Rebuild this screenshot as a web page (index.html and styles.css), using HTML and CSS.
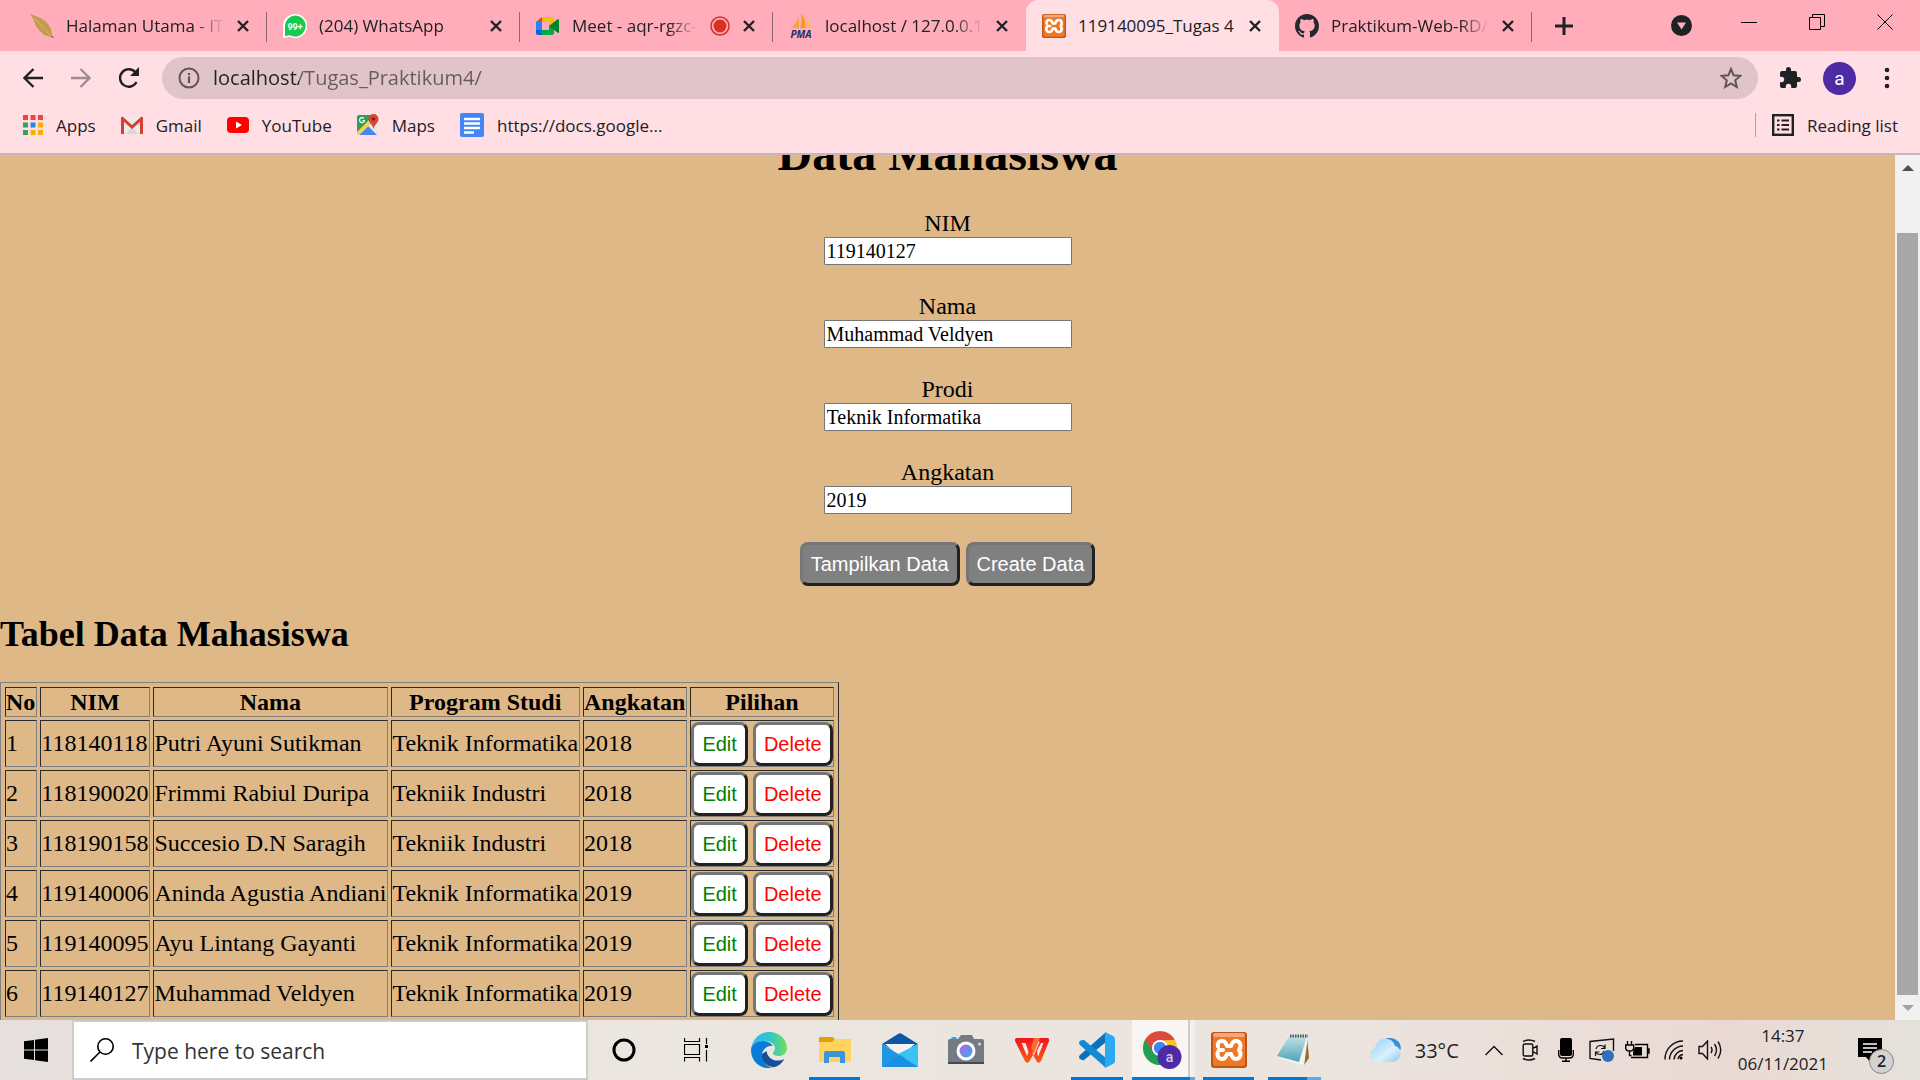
FILE: index.html
```html
<!DOCTYPE html>
<html lang="id">
<head>
<meta charset="utf-8">
<title>119140095_Tugas 4</title>
<link rel="stylesheet" href="styles.css">
</head>
<body>
<svg class="defs" width="0" height="0" aria-hidden="true">
  <defs>
    <linearGradient id="edgeTop" x1="0" y1="0" x2="1" y2="0"><stop offset="0" stop-color="#35b8f0"/><stop offset=".5" stop-color="#2fc6d0"/><stop offset="1" stop-color="#6de05a"/></linearGradient>
    <linearGradient id="lens" x1="0" y1="0" x2="1" y2="1"><stop offset="0" stop-color="#c15ee0"/><stop offset="1" stop-color="#27b4f0"/></linearGradient>
    <linearGradient id="wps" x1="0" y1="0" x2="0" y2="1"><stop offset="0" stop-color="#f0141e"/><stop offset="1" stop-color="#ff5a14"/></linearGradient>
    <linearGradient id="cloud" x1="0" y1="0" x2="1" y2="1"><stop offset="0" stop-color="#8fd0f8"/><stop offset=".6" stop-color="#d9f1fd"/><stop offset="1" stop-color="#8cc9f3"/></linearGradient>
    <linearGradient id="note" x1="0" y1="0" x2="0" y2="1"><stop offset="0" stop-color="#c3e3e6"/><stop offset="1" stop-color="#4fa3b5"/></linearGradient>
    <symbol id="x" viewBox="0 0 14 14"><path d="M2 2l10 10M12 2L2 12" stroke="#202124" stroke-width="2.4"/></symbol>
    <symbol id="xampp" viewBox="0 0 36 36">
      <rect width="36" height="36" rx="3" fill="#b9561a"/><rect x="2" y="2" width="32" height="32" rx="2" fill="#f37623"/><rect x="2" y="1" width="32" height="4" rx="2" fill="#f3a77c"/>
      <path d="M7 14.500C6 11 8 9 11 9c4 0 4 3 5 5h4c1-2 1-5 5-5c5 0 5.500 6 3 9c2.500 3 2 9-3 9c-4 0-4-3-5-5h-4c-1 2-1 5-5 5c-5 0-5.500-6-3-9h4" fill="none" stroke="#fff" stroke-width="4" stroke-linejoin="round" stroke-linecap="round"/>
    </symbol>
  </defs>
</svg>

<header class="chrome">
  <div class="tabstrip">
    <div class="tabs">
      <div class="tab">
        <svg class="fav" viewBox="0 0 24 24"><path d="M0 0c6 2 11 4 14 6c5 4 8 9 8 15l1 3c-3-2-8-2-10-4c-5-4-8-9-9-13C3 4 1 2 0 0z" fill="#c49a4f"/><path d="M4 4l18 19" stroke="#d0a860" stroke-width="1.500" fill="none"/><path d="M21 22l3 1v1l-3-1z" fill="#d93b3b"/></svg>
        <span class="tab-title">Halaman Utama - ITERA</span><button class="tab-close" aria-label="Close"><svg viewBox="0 0 14 14"><use href="#x"/></svg></button>
      </div>
      <div class="tab">
        <svg class="fav" viewBox="0 0 24 24"><path d="M12 0a12 12 0 1 1-5 22.800L0 24V12A12 12 0 0 1 12 0z" fill="#fff"/><path d="M12 1.500a10.500 10.500 0 1 1-5 19.700L2 22V12A10.500 10.500 0 0 1 12 1.500z" fill="#17c950"/><text x="12" y="16" class="badge-text">99+</text></svg>
        <span class="tab-title">(204) WhatsApp</span><button class="tab-close" aria-label="Close"><svg viewBox="0 0 14 14"><use href="#x"/></svg></button>
      </div>
      <div class="tab">
        <svg class="fav" viewBox="0 0 24 24"><path d="M0 8l6-5v5z" fill="#ea4335"/><path d="M6 3h10a2 2 0 0 1 2 2v7h-5V8H6z" fill="#fbbc04"/><path d="M0 8h6v8H0z" fill="#2684fc"/><path d="M0 16h6v5H2a2 2 0 0 1-2-2z" fill="#0066da"/><path d="M6 16h7v-4h5v7a2 2 0 0 1-2 2H6z" fill="#00ac47"/><path d="M13 12l9-7q1 0 1 1v12q0 1-1 1z" fill="#00832d"/></svg>
        <span class="tab-title">Meet - aqr-rgzc-xkp</span>
        <svg class="rec" viewBox="0 0 20 20"><circle cx="10" cy="10" r="9" fill="none" stroke="#d93025" stroke-width="1.500"/><circle cx="10" cy="10" r="6.500" fill="#d93025"/></svg>
        <button class="tab-close" aria-label="Close"><svg viewBox="0 0 14 14"><use href="#x"/></svg></button>
      </div>
      <div class="tab before-active">
        <svg class="fav" viewBox="0 0 24 24"><path d="M10 3v11H2c3-3 6-6 8-11z" fill="#f9a13c"/><path d="M12 0c4 4 5 9 4 14h-5c2-4 2-9 1-14z" fill="#f89c0e"/><path d="M17 4c3 3 5 7 6 10h-5c1-3 0-7-1-10z" fill="#fbb95b"/><text x="12" y="23.500" class="pma-text">PMA</text></svg>
        <span class="tab-title">localhost / 127.0.0.1 / tugas</span><button class="tab-close" aria-label="Close"><svg viewBox="0 0 14 14"><use href="#x"/></svg></button>
      </div>
      <div class="tab active">
        <svg class="fav" viewBox="0 0 36 36"><use href="#xampp"/></svg>
        <span class="tab-title">119140095_Tugas 4</span><button class="tab-close" aria-label="Close"><svg viewBox="0 0 14 14"><use href="#x"/></svg></button>
      </div>
      <div class="tab">
        <svg class="fav" viewBox="0 0 16 16"><path fill="#24292f" d="M8 0C3.580 0 0 3.580 0 8c0 3.540 2.290 6.530 5.470 7.590.4.070.55-.17.55-.38 0-.19-.01-.82-.01-1.490-2.010.37-2.530-.49-2.690-.94-.09-.23-.48-.94-.82-1.130-.28-.15-.68-.52-.01-.53.63-.01 1.080.58 1.230.82.72 1.210 1.870.87 2.330.66.070-.52.28-.87.51-1.070-1.780-.2-3.640-.89-3.640-3.950 0-.87.31-1.590.82-2.150-.08-.2-.36-1.020.08-2.120 0 0 .67-.21 2.200.82.64-.18 1.320-.27 2-.27s1.360.09 2 .27c1.530-1.040 2.200-.82 2.200-.82.44 1.100.16 1.920.08 2.120.51.56.82 1.270.82 2.150 0 3.070-1.870 3.750-3.650 3.950.29.25.54.73.54 1.480 0 1.070-.01 1.930-.01 2.200 0 .21.15.46.55.38A8.010 8.010 0 0 0 16 8c0-4.420-3.580-8-8-8z"/></svg>
        <span class="tab-title">Praktikum-Web-RD/Tugas</span><button class="tab-close" aria-label="Close"><svg viewBox="0 0 14 14"><use href="#x"/></svg></button>
      </div>
    </div>
    <button class="new-tab" aria-label="New tab"><svg width="18" height="18" viewBox="0 0 18 18"><path d="M9 0v18M0 9h18" stroke="#202124" stroke-width="3"/></svg></button>
    <div class="window-controls">
      <button class="tab-search" aria-label="Search tabs"><svg width="21" height="21" viewBox="0 0 21 21"><circle cx="10.500" cy="10.500" r="10.500" fill="#202124"/><path d="M6 7.500h9l-4.500 7z" fill="#ffadbb"/></svg></button>
      <button aria-label="Minimize"><svg width="16" height="16" viewBox="0 0 16 16"><path d="M0 8.500h16" stroke="#000"/></svg></button>
      <button aria-label="Restore"><svg width="16" height="16" viewBox="0 0 16 16"><path d="M.5 3.500h11v12H.5zM3.500 3.500v-3h12v12h-4" fill="none" stroke="#000"/></svg></button>
      <button aria-label="Close window"><svg width="16" height="16" viewBox="0 0 16 16"><path d="M.5.5l15 15M15.500.5l-15 15" stroke="#000"/></svg></button>
    </div>
  </div>

  <div class="toolbar">
    <button class="nav" aria-label="Back"><svg width="20" height="20" viewBox="0 0 20 20"><path d="M20 10H2M10.500 1L1.500 10l9 9" fill="none" stroke="#202124" stroke-width="2.300"/></svg></button>
    <button class="nav" aria-label="Forward"><svg width="20" height="20" viewBox="0 0 20 20"><path d="M0 10h18M9.500 1l9 9-9 9" fill="none" stroke="#a08c90" stroke-width="2.300"/></svg></button>
    <button class="nav" aria-label="Reload"><svg width="22" height="22" viewBox="0 0 22 22"><path d="M18.500 15a8.700 8.700 0 1 1-1-9.500" fill="none" stroke="#202124" stroke-width="2.400"/><path d="M21 0v9h-9z" fill="#202124"/></svg></button>
    <div class="omnibox">
      <svg width="22" height="22" viewBox="0 0 22 22"><circle cx="11" cy="11" r="9.500" fill="none" stroke="#5f5559" stroke-width="2"/><path d="M11 9.500V16M11 6v2.200" stroke="#5f5559" stroke-width="2.200"/></svg>
      <input class="url" type="text" aria-label="Address" value="localhost/Tugas_Praktikum4/" spellcheck="false">
      <button aria-label="Bookmark"><svg width="22" height="22" viewBox="0 0 22 22"><path d="M11 2l2.600 6.300 6.800.6-5.200 4.400 1.600 6.700L11 16.500 5.200 20l1.600-6.700L1.600 8.900l6.800-.6z" fill="none" stroke="#5f5559" stroke-width="2"/></svg></button>
    </div>
    <div class="toolbar-end">
      <button aria-label="Extensions"><svg width="24" height="24" viewBox="0 0 24 24"><path fill="#202124" d="M20.500 11H19V7a2 2 0 0 0-2-2h-4V3.500a2.500 2.500 0 0 0-5 0V5H4a2 2 0 0 0-2 2v3.800h1.500a2.700 2.700 0 0 1 0 5.400H2V20a2 2 0 0 0 2 2h3.800v-1.500a2.700 2.700 0 0 1 5.400 0V22H17a2 2 0 0 0 2-2v-4h1.500a2.500 2.500 0 0 0 0-5z"/></svg></button>
      <button class="avatar" aria-label="Profile">a</button>
      <button aria-label="Menu"><svg width="6" height="22" viewBox="0 0 6 22"><g fill="#202124"><circle cx="3" cy="3" r="2.300"/><circle cx="3" cy="11" r="2.300"/><circle cx="3" cy="19" r="2.300"/></g></svg></button>
    </div>
  </div>

  <nav class="bookmarks">
    <a href="#"><svg width="20" height="20" viewBox="0 0 20 20"><g fill="#f44336"><path d="M0 0h5v5H0zM7.500 0h5v5h-5zM15 0h5v5h-5z"/></g><path d="M0 7.500h5v5H0zM0 15h5v5H0z" fill="#34a15e"/><path d="M7.500 7.500h5v5h-5z" fill="#1e88e5"/><path d="M15 7.500h5v5h-5zM7.500 15h5v5h-5zM15 15h5v5h-5z" fill="#fbad04"/></g></svg>Apps</a>
    <a href="#"><svg width="22" height="17" viewBox="0 0 22 17"><path d="M1 0h20v17H1z" fill="#eceaea"/><path d="M4 17l7-7 7 7z" fill="#d9d6d6"/><path d="M1.500 17V1.500L11 10l9.500-8.500V17" fill="none" stroke="#d93c30" stroke-width="3"/></svg>Gmail</a>
    <a href="#"><svg width="22" height="16" viewBox="0 0 22 16"><rect width="22" height="16" rx="4" fill="#f00"/><path d="M9 4.500l6 3.500-6 3.500z" fill="#fff"/></svg>YouTube</a>
    <a href="#"><svg width="22" height="22" viewBox="0 0 22 22"><rect y="1" width="20" height="20" rx="2" fill="#e9e7e3"/><path d="M0 3q0-2 2-2h14L1 20q-1 0-1-1z" fill="#2e9f5b"/><path d="M2 21l9-9 9 9z" fill="#4a86f0"/><path d="M0 18L14 4l3 3L2 21q-2 0-2-2z" fill="#fbd046"/><path d="M16.500 0a5 5 0 0 1 5 5c0 4-4 5-5 10c-1-5-5-6-5-10a5 5 0 0 1 5-5z" fill="#db4437"/><circle cx="16.500" cy="5" r="1.800" fill="#7b231c"/><path d="M7 4.500a2.500 2.500 0 1 0 .5 2H5.500" fill="none" stroke="#fff" stroke-width="1.200"/></svg>Maps</a>
    <a href="#"><svg width="24" height="24" viewBox="0 0 24 24"><rect width="24" height="24" rx="2" fill="#4285f4"/><path d="M4 6h16M4 10.500h16M4 15h16M4 19.500h10" stroke="#fff" stroke-width="2.300"/></svg>https://docs.google...</a>
    <button class="reading"><svg width="22" height="22" viewBox="0 0 22 22"><rect x="1.200" y="1.200" width="19.600" height="19.600" fill="none" stroke="#202124" stroke-width="2.400"/><path d="M5 6.500h2.500M5 11h2.500M5 15.500h2.500M9.500 6.500H17M9.500 11H17M9.500 15.500H17" stroke="#202124" stroke-width="2.200"/></svg>Reading list</button>
  </nav>
</header>

<div class="viewport">
  <main class="page">
    <h1>Data Mahasiswa</h1>
    <form class="form">
      <div class="field"><label for="nim">NIM</label><input id="nim" type="text" value="119140127"></div>
      <div class="field"><label for="nama">Nama</label><input id="nama" type="text" value="Muhammad Veldyen"></div>
      <div class="field"><label for="prodi">Prodi</label><input id="prodi" type="text" value="Teknik Informatika"></div>
      <div class="field"><label for="angkatan">Angkatan</label><input id="angkatan" type="text" value="2019"></div>
      <div class="actions"><button class="btn" type="button">Tampilkan Data</button><button class="btn" type="button">Create Data</button></div>
    </form>
    <h2>Tabel Data Mahasiswa</h2>
    <table>
      <thead><tr><th>No</th><th>NIM</th><th>Nama</th><th>Program Studi</th><th>Angkatan</th><th>Pilihan</th></tr></thead>
      <tbody>
        <tr><td>1</td><td>118140118</td><td>Putri Ayuni Sutikman</td><td>Teknik Informatika</td><td>2018</td><td><div class="choices"><button class="btn edit">Edit</button><button class="btn delete">Delete</button></div></td></tr>
        <tr><td>2</td><td>118190020</td><td>Frimmi Rabiul Duripa</td><td>Tekniik Industri</td><td>2018</td><td><div class="choices"><button class="btn edit">Edit</button><button class="btn delete">Delete</button></div></td></tr>
        <tr><td>3</td><td>118190158</td><td>Succesio D.N Saragih</td><td>Tekniik Industri</td><td>2018</td><td><div class="choices"><button class="btn edit">Edit</button><button class="btn delete">Delete</button></div></td></tr>
        <tr><td>4</td><td>119140006</td><td>Aninda Agustia Andiani</td><td>Teknik Informatika</td><td>2019</td><td><div class="choices"><button class="btn edit">Edit</button><button class="btn delete">Delete</button></div></td></tr>
        <tr><td>5</td><td>119140095</td><td>Ayu Lintang Gayanti</td><td>Teknik Informatika</td><td>2019</td><td><div class="choices"><button class="btn edit">Edit</button><button class="btn delete">Delete</button></div></td></tr>
        <tr><td>6</td><td>119140127</td><td>Muhammad Veldyen</td><td>Teknik Informatika</td><td>2019</td><td><div class="choices"><button class="btn edit">Edit</button><button class="btn delete">Delete</button></div></td></tr>
      </tbody>
    </table>
  </main>
  <div class="scrollbar" aria-hidden="true">
    <svg width="12" height="6" viewBox="0 0 12 6"><path d="M0 6l6-6 6 6z" fill="#505050"/></svg>
    <div class="track"><div class="thumb"></div></div>
    <svg width="12" height="6" viewBox="0 0 12 6"><path d="M0 0l6 6 6-6z" fill="#a3a3a3"/></svg>
  </div>
</div>

<footer class="taskbar">
  <button class="start" aria-label="Start"><svg width="24" height="24" viewBox="0 0 24 24"><path d="M0 3.300l10-1.400v9.600H0zM11 1.700L24 0v11.500H11zM0 12.500h10v9.600L0 20.700zM11 12.500h13V24l-13-1.700z"/></svg></button>
  <div class="search">
    <svg width="24" height="24" viewBox="0 0 24 24"><circle cx="15.500" cy="8.500" r="7.700" fill="none" stroke="#000" stroke-width="1.600"/><path d="M10 14L.5 23.500" stroke="#000" stroke-width="1.600"/></svg>
    <input type="text" aria-label="Search" placeholder="Type here to search">
  </div>
  <button class="sys" aria-label="Cortana"><svg width="24" height="24" viewBox="0 0 24 24"><circle cx="12" cy="12" r="10" fill="none" stroke="#000" stroke-width="3"/></svg></button>
  <button class="sys" aria-label="Task view"><svg width="24" height="24" viewBox="0 0 24 24"><path d="M.5 0v3.500h15V0M.5 6.500h15v10H.5zM.5 23.500V19.500h15v4M22.500 0v6M22.500 12v11.500" fill="none" stroke="#000" stroke-width="1.200"/><path d="M21 7h3v3h-3z"/></svg></button>
  <div class="apps">
    <button class="app" aria-label="Edge"><svg width="36" height="36" viewBox="0 0 36 36"><path d="M0 18C1 7 9 0 18 0c11 0 18 8 18 16 0 5-4 8-8 8-3 0-6-1-6-3 0-1 2-2 2-5 0-4-5-7-10-7C6 9 1 14 0 18z" fill="url(#edgeTop)"/><path d="M0 18c0-5 6-9 12-9 5 0 9 3 10 5-5-1-12 4-11 11 1 6 6 10 11 11C9 38 0 29 0 18z" fill="#0a7bd6"/><path d="M11 22c-1 8 5 13 12 13.200C28 34 31 31 33.500 27c-9 4-17 0-18-8z" fill="#144f97"/></svg></button>
    <button class="app run" aria-label="File Explorer"><svg width="32" height="26" viewBox="0 0 32 26"><path d="M0 1q0-1 1-1h13l2 3v3H0z" fill="#e0a004"/><path d="M0 5h13l3-3h15q1 0 1 1v21q0 1-1 1H1q-1 0-1-1z" fill="#ffd45e"/><path d="M5 26V16q0-2 2-2h17q2 0 2 2v10h-5v-6H10v6z" fill="#3a95dc"/></svg></button>
    <button class="app" aria-label="Mail"><svg width="36" height="34" viewBox="0 0 36 34"><path d="M0 11L16 1q2-1.500 4 0l16 10-18 10z" fill="#0a57a8"/><path d="M3 11h30L18 24z" fill="#f5f3f2"/><path d="M0 11l18 11 18 12H0z" fill="#2196e3"/><path d="M36 11v23L16 21z" fill="#39c3f2"/><path d="M0 34h36L18 22z" fill="#1b8fe0"/></svg></button>
    <button class="app" aria-label="Camera"><svg width="36" height="30" viewBox="0 0 36 30"><rect x="3" y="2" width="6" height="4" rx="2" fill="#28a6e8"/><path d="M2 4h8l3-4h11l2 4h8q2 0 2 2v23H0V6q0-2 2-2z" fill="#747b84"/><path d="M0 27h36v2H0z" fill="#454a52"/><circle cx="18" cy="16" r="9.500" fill="#fff"/><circle cx="18" cy="16" r="6.500" fill="url(#lens)"/><circle cx="31.500" cy="9" r="1.500" fill="#d6d9dd"/></svg></button>
    <button class="app" aria-label="WPS Office"><svg width="34" height="25" viewBox="0 0 34 25"><path d="M2 0h30q3 0 2 3l-8 20q-1.500 3-4 1l-4-7-4 7q-2.500 2-4-1L0 3q-.5-3 2-3z" fill="url(#wps)"/><path d="M6.500 5h4l3 9-1.500 4z" fill="#f6ebe6"/><path d="M17 16l4.500-11.500h3M23 19l5.500-14h-2.500l-4 8z" fill="#f6ebe6"/><path d="M18.500 17L24 3.500" stroke="#f6ebe6" stroke-width="1.300"/><path d="M19 0h6l-6 15-3-5z" fill="#ff6a30"/></svg></button>
    <button class="app run" aria-label="VS Code"><svg width="36" height="36" viewBox="0 0 36 36"><path d="M1 23q-2 2 0 4l2 1q1 .5 2 0L27 10V0z" fill="#0773bd"/><path d="M1 13q-2-2 0-4l2-1q1-.5 2 0l22 18v10z" fill="#128ad6"/><path d="M26 0l8 4q2 1 2 3v22q0 2-2 3l-8 4z" fill="#2ba9f3"/></svg></button>
    <button class="app run current" aria-label="Chrome"><svg width="40" height="38" viewBox="0 0 40 38"><circle cx="17" cy="17" r="17" fill="#fbc02d"/><path d="M17 17L2.300 8.500A17 17 0 0 0 17 34l6-10z" fill="#1fa055"/><path d="M2.300 8.500A17 17 0 0 1 31.700 8.800L17 9.500 10 21z" fill="#da4a3d"/><circle cx="17" cy="17" r="8" fill="#fff"/><circle cx="17" cy="17" r="6.200" fill="#3f86ee"/><circle cx="26.500" cy="26" r="12" fill="#4f2aa5"/><text x="26.500" y="31" class="chrome-a">a</text></svg></button>
    <button class="app run" aria-label="XAMPP"><svg width="36" height="36" viewBox="0 0 36 36"><use href="#xampp"/></svg></button>
    <button class="app run stacked" aria-label="Notepad"><svg width="34" height="32" viewBox="0 0 34 32"><path d="M30 2l2 22-5 7z" fill="#9a6b2e"/><path d="M11 1l20 2-4 28-6-1-19-6z" fill="#f0f4f5"/><path d="M12 2h18l-8 26L0 22z" fill="url(#note)"/><path d="M13 2h18" stroke="#555" stroke-width="3" stroke-dasharray="1.500 1"/></svg></button>
  </div>
  <div class="tray">
    <button class="weather"><svg width="32" height="24" viewBox="0 0 32 24"><path d="M17 0h6q8 2 9 10l-3 7z" fill="#3a8fd8"/><path d="M7 24a7 7 0 0 1-1-13.500C7 4 12 0 18 1c5 0 7 4 8 7 4 1 6 4 5.500 8-.5 5-4 8-8 8z" fill="url(#cloud)"/></svg>33°C</button>
    <div class="tray-icons">
      <svg width="18" height="11" viewBox="0 0 18 11"><path d="M.5 10L9 1.500l8.500 8.500" fill="none" stroke="#111" stroke-width="1.400"/></svg>
      <svg width="16" height="22" viewBox="0 0 16 22"><path d="M1 2.500q6-3 12 0M1 19.500q6 3 12 0M2.700 5h6.600q1.500 0 1.500 1.500v9q0 1.500-1.500 1.500H2.700q-1.500 0-1.500-1.500v-9Q1.200 5 2.700 5zM11 9.500l4-2.500v8l-4-2.500" fill="none" stroke="#111" stroke-width="1.400"/></svg>
      <svg width="16" height="24" viewBox="0 0 16 24"><rect x="2" y="0" width="12" height="18" rx="2"/><path d="M.7 12v4q0 4 4 4h6.600q4 0 4-4v-4M8 20v3M4 23.300h8" fill="none" stroke="#000" stroke-width="1.400"/></svg>
      <svg width="26" height="24" viewBox="0 0 26 24"><path d="M12 22L1 20.500V3.500L24.500 1v12" fill="none" stroke="#111" stroke-width="1.400"/><path d="M7 11q1-3.500 4.500-3.500T15.500 10M16 6.500v4h-4M15 13q-1 3.500-4 3.500T7 14.500M6.500 18v-4h4" fill="none" stroke="#111" stroke-width="1.200"/><circle cx="19" cy="18" r="6" fill="#2a72bd"/></svg>
      <svg width="25" height="18" viewBox="0 0 25 18"><path d="M2.500 0v4M6.500 0v4M.7 4h8v3q0 3-4 3t-4-3zM4.500 10v4.500h2M10 3.500h12.500v13H6M22.500 8H24v4h-1.500" fill="none" stroke="#000" stroke-width="1.400"/><path d="M10 6h7v8.500H8v-4z"/></svg>
      <svg width="20" height="20" viewBox="0 0 20 20"><path d="M1 19.500A18 18 0 0 1 19 1M5.500 19.500A14 14 0 0 1 19 6M10 19.500A9.500 9.500 0 0 1 19 10.500" fill="none" stroke="#111" stroke-width="1.400"/><path d="M14 19a6 6 0 0 1 5-4.500" fill="none" stroke="#111" stroke-width="1.400"/><circle cx="17" cy="18" r="1.500"/></svg>
      <svg width="24" height="20" viewBox="0 0 24 20"><path d="M1 6.500h3.500L9.500 1v18l-5-5.500H1zM13 7q2 3 0 6M16.500 4q4 6 0 12M20 1.500q5.500 8.500 0 17" fill="none" stroke="#111" stroke-width="1.400"/></svg>
    </div>
    <div class="clock"><span>14:37</span><span>06/11/2021</span></div>
    <button class="notify" aria-label="Notifications"><svg width="24" height="24" viewBox="0 0 24 24"><path d="M0 0h24v19h-8l-4 5-4-5H0z"/><path d="M5 6h14M5 10h14M5 14h9" stroke="#fff" stroke-width="1.300"/></svg><span class="count">2</span></button>
  </div>
</footer>
</body>
</html>
```
FILE: styles.css
```css
* { box-sizing: border-box; }

body {
  margin: 0;
  height: 100vh;
  display: flex;
  flex-direction: column;
  overflow: hidden;
  font-family: "Open Sans", "Noto Sans", sans-serif;
  color: #202124;
}

button {
  border: 0;
  margin: 0;
  padding: 0;
  background: none;
  font: inherit;
  color: inherit;
}

svg { display: block; flex: none; }
.defs { position: absolute; }

/* Browser frame */
.chrome {
  flex: none;
  background: #ffdee4;
  border-bottom: 2px solid #cbb3b9;
}

.tabstrip {
  display: flex;
  height: 51px;
  padding-left: 14px;
  background: #ffadbb;
}

.tabs {
  display: flex;
  flex: 0 1 1518px;
  min-width: 0;
}

.tab {
  position: relative;
  display: flex;
  flex: 1 1 0;
  min-width: 0;
  align-items: center;
  gap: 12px;
  padding: 0 17px 0 16px;
  font-size: 17px;
}

.tab::after {
  content: "";
  position: absolute;
  right: 0;
  top: 12px;
  width: 1px;
  height: 30px;
  background: #8f6971;
}

.tab.active::after,
.tab.before-active::after { display: none; }

.tab.active {
  background: #ffdee4;
  border-radius: 12px 12px 0 0;
}

.fav { width: 24px; height: 24px; }
.rec { width: 20px; height: 20px; }

.tab-title {
  flex: 1;
  min-width: 0;
  overflow: hidden;
  white-space: nowrap;
  -webkit-mask-image: linear-gradient(90deg, #000 calc(100% - 30px), transparent);
  mask-image: linear-gradient(90deg, #000 calc(100% - 30px), transparent);
}

.active .tab-title {
  -webkit-mask-image: none;
  mask-image: none;
}

.tab-close svg { width: 14px; height: 14px; }

.badge-text { font: 700 9px Roboto, sans-serif; fill: #fff; text-anchor: middle; }
.pma-text { font: italic 700 10px "Open Sans", sans-serif; fill: #2b2d5c; text-anchor: middle; }
.chrome-a { font: 500 14px Roboto, sans-serif; fill: #d8cdf0; text-anchor: middle; }

.new-tab { padding: 0 23px; }

.window-controls {
  display: flex;
  margin-left: auto;
  padding: 0 1px 8px 0;
}

.window-controls button {
  display: flex;
  width: 68px;
  align-items: center;
  justify-content: center;
}

.window-controls .tab-search { padding-top: 8px; }

.toolbar {
  display: flex;
  align-items: center;
  height: 54px;
  padding: 0 30px 0 9px;
}

.nav {
  display: flex;
  width: 48px;
  justify-content: center;
}

.omnibox {
  display: flex;
  flex: 1;
  align-items: center;
  gap: 13px;
  height: 42px;
  margin-left: 9px;
  padding: 0 16px;
  border-radius: 21px;
  background: #e0c4ca;
}

.url {
  flex: 1;
  min-width: 0;
  padding: 0;
  border: 0;
  font: 20px/28px "Open Sans", "Noto Sans", sans-serif;
  color: transparent;
  background: linear-gradient(90deg, #202124 86px, #655a5e 86px);
  -webkit-background-clip: text;
  background-clip: text;
}

.toolbar-end {
  display: flex;
  align-items: center;
  gap: 21px;
  margin-left: 20px;
}

.toolbar-end button:last-child { padding-left: 7px; }

.toolbar-end .avatar {
  width: 33px;
  height: 33px;
  border-radius: 50%;
  background: #4f2aa5;
  color: #fff;
  font: 19px/33px Roboto, sans-serif;
}

.bookmarks {
  display: flex;
  align-items: center;
  gap: 25px;
  height: 48px;
  padding: 0 22px 8px 23px;
  font-size: 17px;
}

.bookmarks a,
.reading {
  display: flex;
  align-items: center;
  gap: 13px;
  color: inherit;
  text-decoration: none;
  white-space: nowrap;
}

.reading {
  height: 24px;
  margin-left: auto;
  padding-left: 16px;
  border-left: 1px solid #b99fa5;
}

/* Web page */
.viewport {
  display: flex;
  flex: 1;
  min-height: 0;
  overflow: hidden;
  background: burlywood;
}

.page {
  flex: 1;
  min-width: 0;
  margin-top: -29px;
  font: 24px/27px "Liberation Serif", "Times New Roman", serif;
  color: #000;
}

h1 {
  margin: 0 0 29px;
  font-size: 48px;
  line-height: 55px;
  text-align: center;
}

h2 {
  margin: 28px 0 27px;
  font-size: 36px;
  line-height: 41px;
}

.form,
.field {
  display: flex;
  flex-direction: column;
  align-items: center;
}

.form { gap: 28px; }

.field input {
  width: 248px;
  height: 28px;
  padding: 1px 2px;
  border: 1px solid #767676;
  border-radius: 1px;
  background: #fff;
  font: 20px/24px "Liberation Serif", "Times New Roman", serif;
  color: #000;
}

.actions { display: flex; gap: 6px; }
.choices { display: flex; gap: 5px; }

.btn {
  padding: 7px 8px;
  border: 3px solid;
  border-color: #767676 #212121 #212121 #767676;
  border-radius: 8px;
  background: gray;
  color: #fff;
  font: 20px/24px "Liberation Sans", Arial, sans-serif;
}

.btn.edit { background: #fff; color: green; }
.btn.delete { background: #fff; color: red; }

table {
  padding: 1px;
  border: 1px solid;
  border-color: #808080 #2b2b2b #2b2b2b #808080;
  border-spacing: 3px;
}

th,
td {
  padding: 0 1px 0 0;
  border: 1px solid;
  border-color: #2b2b2b #808080 #808080 #2b2b2b;
  white-space: nowrap;
}

th:last-child,
td:last-child { padding: 0; }

th { height: 30px; }
td { height: 47px; }

.scrollbar {
  display: flex;
  flex-direction: column;
  align-items: center;
  width: 25px;
  padding: 10px 0 9px;
  background: #f1f1f1;
}

.track {
  display: flex;
  flex: 1;
  flex-direction: column;
  justify-content: flex-end;
  padding-bottom: 10px;
}

.thumb {
  width: 21px;
  height: 92.5%;
  background: #a8a8a8;
}

/* Windows taskbar */
.taskbar {
  display: flex;
  flex: none;
  height: 60px;
  background: linear-gradient(90deg, #e5dfdd, #ebe6df 35%, #ece4df 70%, #ead9d3 90%, #e5e1db);
}

.start {
  display: flex;
  width: 72px;
  align-items: center;
  justify-content: center;
}

.search {
  display: flex;
  flex: 0 1 516px;
  align-items: center;
  gap: 18px;
  padding: 0 16px;
  border: 2px solid #ccc;
  background: #fff;
}

.search input {
  flex: 1;
  min-width: 0;
  padding: 2px 0 0;
  border: 0;
  background: none;
  font: 21px/30px "Open Sans", "Noto Sans", sans-serif;
}

.search input::placeholder { color: #333; opacity: 1; }

.sys {
  display: flex;
  width: 72px;
  align-items: center;
  justify-content: center;
}

.apps {
  display: flex;
  flex: 0 0 591px;
  margin-left: 4px;
}

.app {
  position: relative;
  display: flex;
  flex: 1 1 0;
  align-items: center;
  justify-content: center;
}

.app.run::after {
  content: "";
  position: absolute;
  left: 7px;
  right: 7px;
  bottom: 0;
  height: 3px;
  background: #0078d7;
}

.app.current {
  background: linear-gradient(90deg, transparent 2px, #f8f5f3 2px 58px, #d0cbc7 58px 60px, #f3efed 60px 65px, transparent 65px);
}

.app.current::after { left: 2px; right: 1px; background: linear-gradient(90deg, #0078d7 58px, #62a8e5 58px); }
.app.stacked::after { right: 6px; background: linear-gradient(90deg, #0078d7 39px, #62a8e5 39px); }

.tray {
  display: flex;
  align-items: center;
  margin-left: auto;
  padding-right: 26px;
}

.weather {
  display: flex;
  align-items: center;
  gap: 14px;
  margin-right: 17px;
  font-size: 20px;
}

.tray-icons {
  display: grid;
  grid-template-columns: repeat(7, 36px);
  place-items: center;
}

.clock {
  display: flex;
  flex-direction: column;
  margin: 0 30px 0 10px;
  font-size: 17px;
  line-height: 28px;
  text-align: center;
}

.notify { position: relative; padding-right: 12px; }

.count {
  position: absolute;
  left: 11px;
  top: 11px;
  width: 25px;
  height: 25px;
  border: 1px solid #888;
  border-radius: 50%;
  background: #d4d2d0;
  font: 600 16px/23px "Open Sans", sans-serif;
  text-align: center;
}
```
